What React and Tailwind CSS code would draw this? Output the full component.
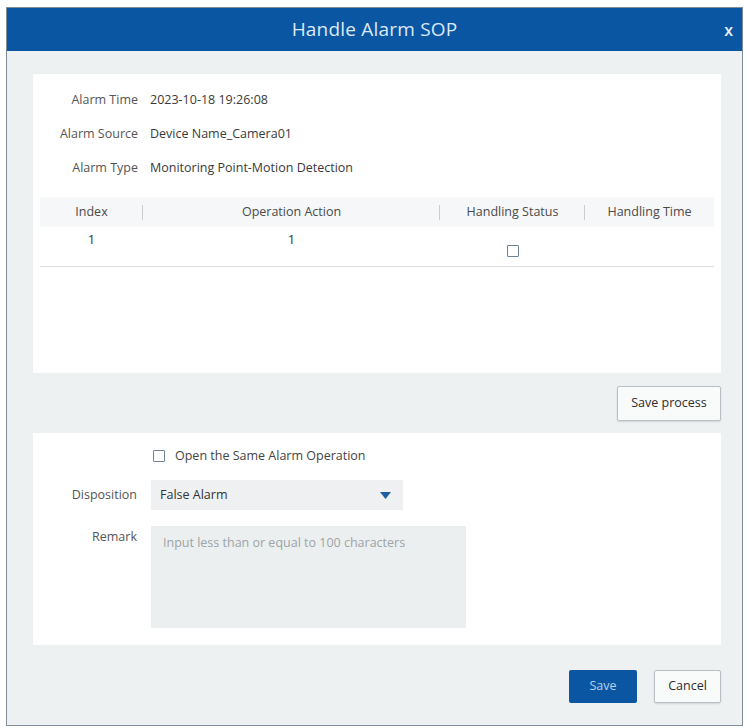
import { useState } from "react";

const info = [
  { label: "Alarm Time", value: "2023-10-18 19:26:08" },
  { label: "Alarm Source", value: "Device Name_Camera01" },
  { label: "Alarm Type", value: "Monitoring Point-Motion Detection" },
];

function Box() {
  return <span className="block w-[12px] h-[12px] border border-[#6d849b] rounded-[1px] bg-white" />;
}

export default function App() {
  const [remark, setRemark] = useState("");

  return (
    <div className="w-[748px] h-[728px] bg-white pt-[7px] pl-[6px] pr-[5px] pb-[2px] font-['Open_Sans',sans-serif] text-[13px] text-[#3a3a3a]">
      <div className="h-full flex flex-col border border-[#7f8d98] bg-[#eef1f2]">
        {/* title bar */}
        <div className="h-[43px] shrink-0 bg-[#0b56a3] flex items-center relative">
          <span className="flex-1 text-center text-[19px] text-[#dce9f7] tracking-[0.2px]">Handle Alarm SOP</span>
          <span className="absolute right-[9px] top-[10px] text-[16px] font-semibold text-[#e8f0fa]">x</span>
        </div>

        <div className="flex-1 flex flex-col pl-[26px] pr-[21px]">
          {/* alarm info + operation table */}
          <div className="mt-[23px] h-[299px] bg-white pt-[17px] px-[7px]">
            <div className="flex flex-col gap-[15px]">
              {info.map((r) => (
                <div key={r.label} className="flex items-center h-[19px]">
                  <span className="w-[98px] text-right text-[#555] text-[12.5px]">{r.label}</span>
                  <span className="ml-[12px] text-[#3a3a3a] text-[12.5px]">{r.value}</span>
                </div>
              ))}
            </div>

            <div className="mt-[19px]">
              <div className="grid grid-cols-[103px_297px_145px_1fr] h-[30px] items-center bg-[#f6f7f8] text-[#4a4a4a] text-[12.5px]">
                <div className="relative text-center">Index<span className="absolute right-0 top-[2px] h-[15px] w-px bg-[#c9ced3]" /></div>
                <div className="relative text-center">Operation Action<span className="absolute right-0 top-[2px] h-[15px] w-px bg-[#c9ced3]" /></div>
                <div className="relative text-center">Handling Status<span className="absolute right-0 top-[2px] h-[15px] w-px bg-[#c9ced3]" /></div>
                <div className="text-center">Handling Time</div>
              </div>
              <div className="grid grid-cols-[103px_297px_145px_1fr] h-[40px] border-b border-[#dcdfe2] text-[#333]">
                <div className="text-center pt-[3px]">1</div>
                <div className="text-center pt-[3px]">1</div>
                <div className="flex justify-center pt-[18px]">
                  <Box />
                </div>
                <div />
              </div>
            </div>
          </div>

          <div className="flex justify-end mt-[13px]">
            <button className="w-[104px] h-[35px] border border-[#b9bfc4] bg-[#f9fafa] rounded-[2px] shadow-[0_1px_2px_rgba(0,0,0,0.12)] text-[#2d2d2d] text-[12.5px]">
              Save process
            </button>
          </div>

          {/* disposition form */}
          <div className="mt-[12px] h-[212px] bg-white pt-[16px]">
            <div className="flex items-center h-[14px] pl-[120px] gap-[10px] text-[#444] text-[12.5px]">
              <Box />
              <span>Open the Same Alarm Operation</span>
            </div>
            <div className="flex items-center mt-[17px]">
              <span className="w-[104px] text-right text-[#555] text-[12.5px]">Disposition</span>
              <div className="ml-[14px] w-[252px] h-[30px] bg-[#eef0f1] flex items-center justify-between pl-[9px] pr-[12px] text-[#333] text-[12.5px]">
                <span>False Alarm</span>
                <svg width="11" height="7" viewBox="0 0 11 7">
                  <path d="M0 0h11L5.5 7z" fill="#1b5ea6" />
                </svg>
              </div>
            </div>
            <div className="flex mt-[16px]">
              <span className="w-[104px] text-right text-[#555] text-[12.5px] pt-[2px]">Remark</span>
              <textarea
                value={remark}
                onChange={(e) => setRemark(e.target.value)}
                placeholder="Input less than or equal to 100 characters"
                className="ml-[14px] w-[315px] h-[102px] bg-[#ecefef] resize-none outline-none px-[12px] py-[8px] text-[12.5px] text-[#333] placeholder:text-[#9da3a8]"
              />
            </div>
          </div>

          <div className="flex justify-end gap-[17px] mt-[25px]">
            <button className="w-[68px] h-[33px] bg-[#0b56a3] rounded-[2px] text-[#b9d3ee] text-[12.5px]">Save</button>
            <button className="w-[67px] h-[33px] border border-[#b9bfc4] bg-[#f9fafa] rounded-[2px] shadow-[0_1px_2px_rgba(0,0,0,0.12)] text-[#2d2d2d] text-[12.5px]">
              Cancel
            </button>
          </div>
        </div>
      </div>
    </div>
  );
}
